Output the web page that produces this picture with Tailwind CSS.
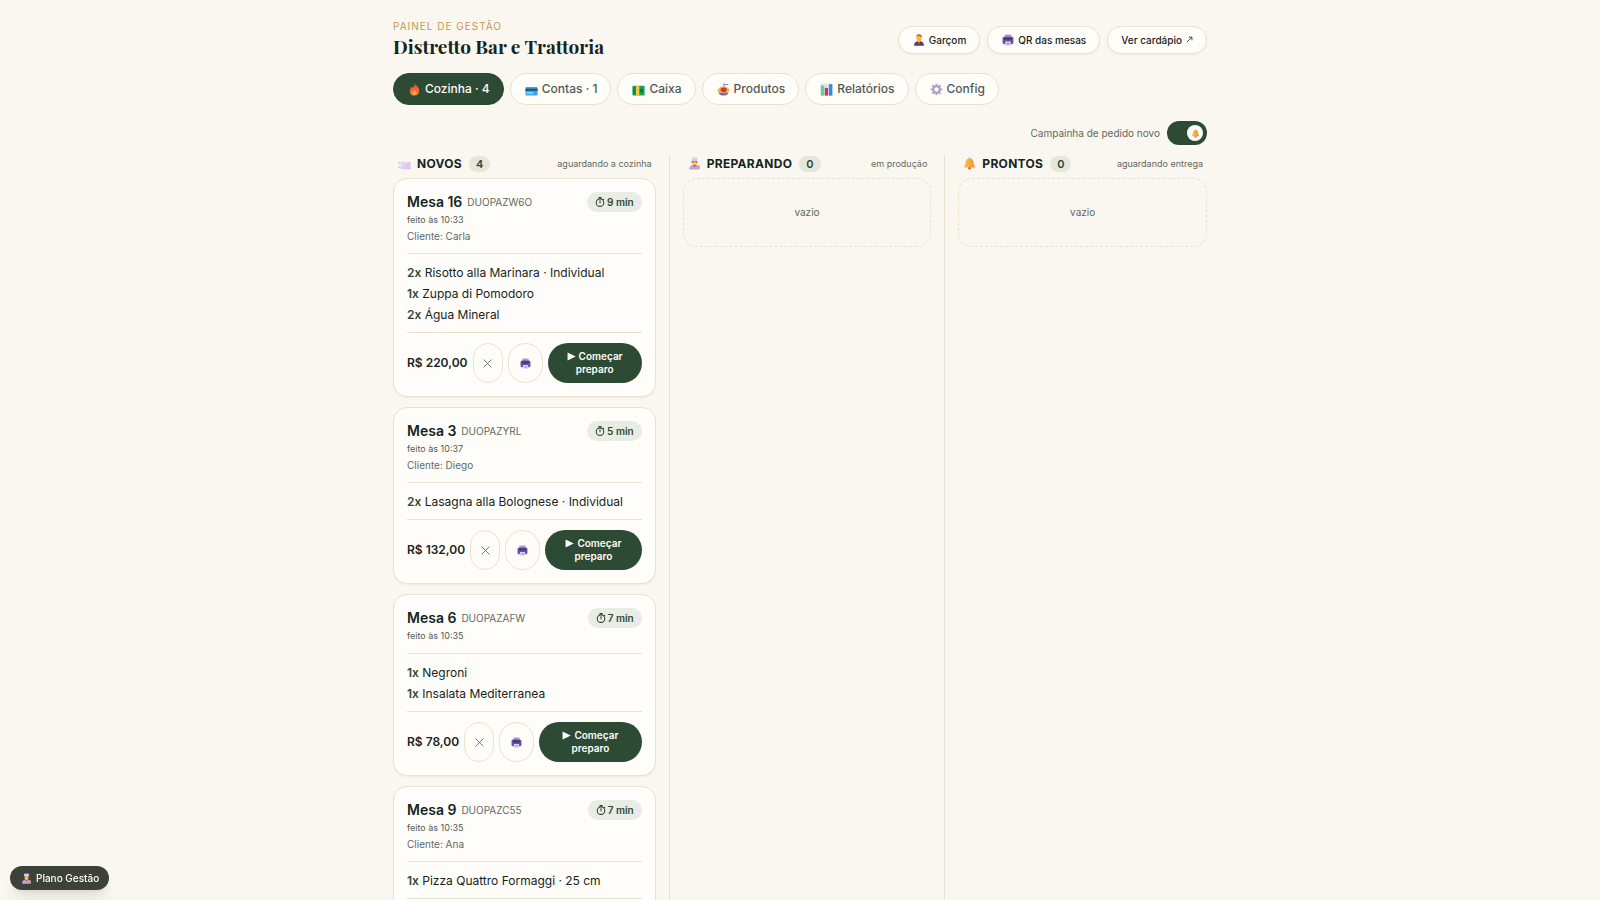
<!DOCTYPE html>
<html lang="pt-BR">
<head>
    <meta charset="UTF-8">
    <meta name="viewport" content="width=device-width, initial-scale=1.0">
    <title>Painel de Gestão · Distretto Bar e Trattoria</title>
    <script src="https://cdn.jsdelivr.net/npm/@tailwindcss/browser@4"></script>
</head>
<body class="min-h-screen bg-[#faf7f0] font-['Inter','Liberation_Sans',sans-serif] text-[#16241d]">

    <!-- Icon set -->
    <svg class="absolute size-0" aria-hidden="true">
        <defs>
            <linearGradient id="g-fire" x1="0" y1="0" x2="0" y2="1"><stop offset="0" stop-color="#e8442f"/><stop offset="1" stop-color="#ff8a3c"/></linearGradient>
            <linearGradient id="g-bell" x1="0" y1="0" x2="1" y2="0"><stop offset="0" stop-color="#ffc94d"/><stop offset="1" stop-color="#f08a35"/></linearGradient>
            <linearGradient id="g-mail" x1="0" y1="0" x2="1" y2="1"><stop offset="0" stop-color="#efe6fa"/><stop offset="1" stop-color="#d9b8f0"/></linearGradient>
        </defs>
        <symbol id="i-fire" viewBox="0 0 16 16">
            <path fill="url(#g-fire)" d="M8.6 0.6c.5 2 3 3 4.300 5.200 1.900 3.400.8 9.600-4.900 9.600S1.500 10.400 3 7c.4-1 1-1.700 1.300-2.700.7.5 1 1.100 1.200 1.700C7.300 4.600 8.700 3 8.600.6z"/>
            <path fill="#ffb04a" d="M8.300 8.500c.3 1.300 1.900 1.900 1.900 3.600 0 1.400-.9 2.300-2.200 2.300s-2.300-.8-2.300-2.200c0-1.700 2-2.100 2.600-3.700z"/>
        </symbol>
        <symbol id="i-card" viewBox="0 0 16 16">
            <rect x="0.500" y="5" width="15" height="10.500" rx="1.200" fill="#3ba7ea"/>
            <rect x="0.500" y="7" width="15" height="2.600" fill="#24506f"/>
            <rect x="2" y="11.500" width="8" height="1.600" fill="#a9dcf8"/>
        </symbol>
        <symbol id="i-cash" viewBox="0 0 16 16">
            <rect x="0.500" y="3.500" width="15" height="12" rx="1" fill="#12a558"/>
            <circle cx="11.500" cy="9.500" r="2.600" fill="#0b7d3e"/>
            <rect x="5" y="3.500" width="4" height="12" fill="#f6c84a"/>
            <rect x="1.500" y="5" width="2.500" height="9" fill="#0b8a45"/>
        </symbol>
        <symbol id="i-pasta" viewBox="0 0 16 16">
            <path stroke="#8d7aa8" stroke-width="1.200" d="M8.500 0.500v6M8.500 2h5.500"/>
            <ellipse cx="8" cy="9" rx="7.300" ry="4.600" fill="#f6b93c"/>
            <path fill="#8464b4" d="M1.800 12h12.400c-1 2.500-3 3.500-6.200 3.500s-5.200-1-6.200-3.500z"/>
            <ellipse cx="8.200" cy="8.300" rx="3.800" ry="2.900" fill="#d62f4b"/>
        </symbol>
        <symbol id="i-chart" viewBox="0 0 16 16">
            <rect x="0.500" y="0.500" width="15" height="15" rx="1" fill="#dfe6ee"/>
            <rect x="1" y="3" width="4.200" height="12.500" fill="#63d488"/>
            <rect x="6" y="6" width="4" height="9.500" fill="#d8315f"/>
            <rect x="11" y="1.500" width="4.200" height="14" fill="#2f8be0"/>
        </symbol>
        <symbol id="i-gear" viewBox="0 0 16 16">
            <g stroke="#b3a6cb" stroke-width="2.600"><path d="M8 .8v14.400M.8 8h14.400M2.900 2.900l10.200 10.200M13.100 2.900L2.900 13.100"/></g>
            <circle cx="8" cy="8" r="5.200" fill="#a99bc4"/>
            <circle cx="8" cy="8" r="2.700" fill="#fffdf9"/>
        </symbol>
        <symbol id="i-waiter" viewBox="0 0 16 16">
            <path fill="#503c78" d="M1.500 15.500c0-4 1.500-6 6.500-6s6.500 2 6.500 6z"/>
            <path fill="#e8dff5" d="M6.300 9.500h3.400L8 12z"/>
            <path fill="#d8315f" d="M7.400 10.500h1.200l.6 3.500H6.800z"/>
            <ellipse cx="8" cy="5.600" rx="3.400" ry="4.500" fill="#ffb92e"/>
            <path fill="#a86a3c" d="M4.400 4.500C4 2 5.500.3 8.200.3s4 1.600 3.400 4.200C10.500 3.500 9.800 2.800 9.200 2 8 2.800 6.500 3.200 5.200 3z"/>
        </symbol>
        <symbol id="i-printer" viewBox="0 0 16 16">
            <rect x="3.500" y="0.800" width="9" height="5" fill="#a999cc"/>
            <rect x="0.800" y="3.500" width="14.400" height="10" rx="2.200" fill="#6650a0"/>
            <rect x="3" y="5.500" width="10" height="2" fill="#402d6c"/>
            <rect x="4.200" y="10" width="7.600" height="5.500" rx="0.500" fill="#ded4f0"/>
            <path stroke="#7f6bb0" d="M5.500 13h5"/>
        </symbol>
        <symbol id="i-mail" viewBox="0 0 16 16">
            <rect x="3.500" y="6" width="12" height="9" rx="0.800" fill="url(#g-mail)"/>
            <path fill="none" stroke="#cdb4e8" stroke-width="0.800" d="M4 6.500l5.500 4L15 6.500"/>
            <path stroke="#8fd0ee" stroke-width="1.200" d="M0 7h3M1 10h2M0 13h3"/>
        </symbol>
        <symbol id="i-cook" viewBox="0 0 16 16">
            <path fill="#b9a4dd" d="M1.500 15.500c0-4 2-6 6.500-6s6.500 2 6.500 6z"/>
            <path fill="#e2423c" d="M5.500 9.300h5L8.300 12.500z"/>
            <ellipse cx="8" cy="6.800" rx="3" ry="3.400" fill="#ffc143"/>
            <path fill="#8a5238" d="M4.600 5h6.800v2.500h-1L10 5.800H6l-.4 1.700h-1z"/>
            <path fill="#d8cdeb" d="M4.800 5.200L4.200 2C5 .3 11 .3 11.800 2l-.6 3.200z"/>
            <circle cx="13.300" cy="12" r="1.400" fill="#f09a3c"/>
        </symbol>
        <symbol id="i-bell" viewBox="0 0 16 16">
            <circle cx="8" cy="13.600" r="1.900" fill="#d9702c"/>
            <path fill="url(#g-bell)" d="M8 .6c.8 0 1.200.6 1.200 1.300 2.500.7 3.500 2.500 3.700 5 .2 2.700.8 4.300 2.400 6.100H.7c1.600-1.800 2.200-3.400 2.400-6.100.2-2.500 1.200-4.300 3.700-5C6.800 1.200 7.200.6 8 .6z"/>
        </symbol>
        <symbol id="i-clock" viewBox="0 0 16 16">
            <g fill="none" stroke="currentColor" stroke-width="1.700"><circle cx="8" cy="9" r="6"/><path d="M8 10V5M5.500 1h5M8 1v2M12.800 3l1.500 1.500"/></g>
        </symbol>
        <symbol id="i-close" viewBox="0 0 16 16">
            <path stroke="currentColor" stroke-width="1.600" d="M1 1l14 14M15 1L1 15"/>
        </symbol>
        <symbol id="i-play" viewBox="0 0 16 16">
            <path fill="currentColor" d="M1 1L15.500 8 1 15z"/>
        </symbol>
        <symbol id="i-arrow" viewBox="0 0 16 16">
            <path fill="none" stroke="currentColor" stroke-width="1.800" d="M2 14L13 3M6 2.500h7.500V10"/>
        </symbol>
    </svg>

    <div class="mx-auto flex min-h-screen max-w-[814px] flex-col pt-[19px]">

        <!-- Header -->
        <header class="flex items-center justify-between">
            <div>
                <p class="text-[10px] leading-[14px] tracking-widest text-[#c0994f]">PAINEL DE GESTÃO</p>
                <h1 class="font-['Playfair_Display','Liberation_Serif',serif] text-[19px] leading-[27px] font-bold">Distretto Bar e Trattoria</h1>
            </div>
            <nav class="flex gap-[7px] text-[10px] leading-4 font-medium">
                <a href="#garcom" class="flex items-center rounded-full border border-[#e9e2d0] bg-[#fffdf9] px-[13px] py-[5px] shadow-xs"><svg class="mr-1 ml-px size-3"><use href="#i-waiter"/></svg>Garçom</a>
                <a href="#qr" class="flex items-center rounded-full border border-[#e9e2d0] bg-[#fffdf9] px-[13px] py-[5px] shadow-xs"><svg class="mr-1 ml-px size-3"><use href="#i-printer"/></svg>QR das mesas</a>
                <a href="#cardapio" class="flex items-center rounded-full border border-[#e9e2d0] bg-[#fffdf9] px-[13px] py-[5px] shadow-xs">Ver cardápio<svg class="ml-1 size-[7px]"><use href="#i-arrow"/></svg></a>
            </nav>
        </header>

        <!-- Tabs -->
        <nav class="mt-[13px] flex gap-[6px] text-xs leading-5 font-medium text-[#4f5a53]">
            <button type="button" class="flex items-center rounded-full border border-[#2d4a34] bg-[#2d4a34] px-[13px] py-[5px] text-[#fffdf9]"><svg class="mr-1 ml-px size-[13px]"><use href="#i-fire"/></svg>Cozinha · 4</button>
            <button type="button" class="flex items-center rounded-full border border-[#e9e2d0] bg-[#fffdf9] px-[13px] py-[5px]"><svg class="mr-1 ml-px size-[13px]"><use href="#i-card"/></svg>Contas · 1</button>
            <button type="button" class="flex items-center rounded-full border border-[#e9e2d0] bg-[#fffdf9] px-[13px] py-[5px]"><svg class="mr-1 ml-px size-[13px]"><use href="#i-cash"/></svg>Caixa</button>
            <button type="button" class="flex items-center rounded-full border border-[#e9e2d0] bg-[#fffdf9] px-[13px] py-[5px]"><svg class="mr-1 ml-px size-[13px]"><use href="#i-pasta"/></svg>Produtos</button>
            <button type="button" class="flex items-center rounded-full border border-[#e9e2d0] bg-[#fffdf9] px-[13px] py-[5px]"><svg class="mr-1 ml-px size-[13px]"><use href="#i-chart"/></svg>Relatórios</button>
            <button type="button" class="flex items-center rounded-full border border-[#e9e2d0] bg-[#fffdf9] px-[13px] py-[5px]"><svg class="mr-1 ml-px size-[13px]"><use href="#i-gear"/></svg>Config</button>
        </nav>

        <!-- New order bell -->
        <div class="mt-4 flex items-center justify-end gap-[7px]">
            <label for="campainha" class="text-[10px] leading-4 text-[#5f6962]">Campainha de pedido novo</label>
            <button type="button" id="campainha" role="switch" aria-checked="true" class="flex h-6 w-10 items-center justify-end rounded-full bg-[#2d4a34] pr-1">
                <span class="flex size-4 items-center justify-center rounded-full bg-white"><svg class="size-[9px]"><use href="#i-bell"/></svg></span>
            </button>
        </div>

        <!-- Board -->
        <main class="mt-[10px] grid flex-1 grid-cols-3 gap-[13px]">
            <section>
                <div class="flex h-[17px] items-center pr-1 pl-[5px]">
                    <svg class="mr-[6px] size-[13px]"><use href="#i-mail"/></svg>
                    <h2 class="text-xs leading-4 font-bold tracking-wide">NOVOS</h2>
                    <span class="ml-[7px] rounded-full bg-[#e6e6dc] px-[7px] text-[11px] leading-4 font-semibold text-[#2d4a34]">4</span>
                    <span class="ml-auto text-[9px] leading-4 text-[#5f6962]">aguardando a cozinha</span>
                </div>

                <div class="mt-[6px] flex flex-col gap-[10px]">
                    <article class="rounded-[14px] border border-[#e9e2d0] bg-[#fffdf9] p-[13px] shadow-xs">
                        <div class="flex h-5 items-center">
                            <h3 class="text-sm font-semibold">Mesa 16</h3>
                            <span class="mt-px ml-[5px] text-[10px] text-[#5f6962]">DUOPAZW6O</span>
                            <span class="ml-auto flex items-center rounded-full bg-[#e9ebe5] px-2 text-[10px] leading-5 font-semibold text-[#2d4a34]"><svg class="mr-[2px] size-[10px]"><use href="#i-clock"/></svg>9 min</span>
                        </div>
                        <p class="text-[9px] leading-4 text-[#4f5a53]">feito às 10:33</p>
                        <p class="text-[10px] leading-4 text-[#5f6962]">Cliente: Carla</p>
                        <ul class="mt-[9px] border-y border-[#e9e2d0] pt-2 pb-[7px] text-xs leading-[21px]">
                            <li><b class="font-semibold text-[#2d4a34]">2x</b> Risotto alla Marinara · Individual</li>
                            <li><b class="font-semibold text-[#2d4a34]">1x</b> Zuppa di Pomodoro</li>
                            <li><b class="font-semibold text-[#2d4a34]">2x</b> Água Mineral</li>
                        </ul>
                        <div class="mt-[10px] flex items-center gap-[5px]">
                            <span class="text-xs font-semibold whitespace-nowrap">R$ 220,00</span>
                            <button type="button" aria-label="Cancelar" class="flex h-10 w-[30px] shrink-0 items-center justify-center rounded-full border border-[#e9e2d0] text-[#5f6962]"><svg class="size-[9px]"><use href="#i-close"/></svg></button>
                            <button type="button" aria-label="Imprimir" class="flex h-10 w-[35px] shrink-0 items-center justify-center rounded-full border border-[#e9e2d0]"><svg class="size-[11px]"><use href="#i-printer"/></svg></button>
                            <button type="button" class="flex h-10 flex-1 flex-col items-center justify-center rounded-full bg-[#2d4a34] text-[10px] leading-[13px] font-semibold text-[#fffdf9]"><span class="flex items-center gap-[3px]"><svg class="size-[9px]"><use href="#i-play"/></svg>Começar</span>preparo</button>
                        </div>
                    </article>

                    <article class="rounded-[14px] border border-[#e9e2d0] bg-[#fffdf9] p-[13px] shadow-xs">
                        <div class="flex h-5 items-center">
                            <h3 class="text-sm font-semibold">Mesa 3</h3>
                            <span class="mt-px ml-[5px] text-[10px] text-[#5f6962]">DUOPAZYRL</span>
                            <span class="ml-auto flex items-center rounded-full bg-[#e9ebe5] px-2 text-[10px] leading-5 font-semibold text-[#2d4a34]"><svg class="mr-[2px] size-[10px]"><use href="#i-clock"/></svg>5 min</span>
                        </div>
                        <p class="text-[9px] leading-4 text-[#4f5a53]">feito às 10:37</p>
                        <p class="text-[10px] leading-4 text-[#5f6962]">Cliente: Diego</p>
                        <ul class="mt-[9px] border-y border-[#e9e2d0] pt-2 pb-[7px] text-xs leading-[21px]">
                            <li><b class="font-semibold text-[#2d4a34]">2x</b> Lasagna alla Bolognese · Individual</li>
                        </ul>
                        <div class="mt-[10px] flex items-center gap-[5px]">
                            <span class="text-xs font-semibold whitespace-nowrap">R$ 132,00</span>
                            <button type="button" aria-label="Cancelar" class="flex h-10 w-[30px] shrink-0 items-center justify-center rounded-full border border-[#e9e2d0] text-[#5f6962]"><svg class="size-[9px]"><use href="#i-close"/></svg></button>
                            <button type="button" aria-label="Imprimir" class="flex h-10 w-[35px] shrink-0 items-center justify-center rounded-full border border-[#e9e2d0]"><svg class="size-[11px]"><use href="#i-printer"/></svg></button>
                            <button type="button" class="flex h-10 flex-1 flex-col items-center justify-center rounded-full bg-[#2d4a34] text-[10px] leading-[13px] font-semibold text-[#fffdf9]"><span class="flex items-center gap-[3px]"><svg class="size-[9px]"><use href="#i-play"/></svg>Começar</span>preparo</button>
                        </div>
                    </article>

                    <article class="rounded-[14px] border border-[#e9e2d0] bg-[#fffdf9] p-[13px] shadow-xs">
                        <div class="flex h-5 items-center">
                            <h3 class="text-sm font-semibold">Mesa 6</h3>
                            <span class="mt-px ml-[5px] text-[10px] text-[#5f6962]">DUOPAZAFW</span>
                            <span class="ml-auto flex items-center rounded-full bg-[#e9ebe5] px-2 text-[10px] leading-5 font-semibold text-[#2d4a34]"><svg class="mr-[2px] size-[10px]"><use href="#i-clock"/></svg>7 min</span>
                        </div>
                        <p class="text-[9px] leading-4 text-[#4f5a53]">feito às 10:35</p>
                        <ul class="mt-[9px] border-y border-[#e9e2d0] pt-2 pb-[7px] text-xs leading-[21px]">
                            <li><b class="font-semibold text-[#2d4a34]">1x</b> Negroni</li>
                            <li><b class="font-semibold text-[#2d4a34]">1x</b> Insalata Mediterranea</li>
                        </ul>
                        <div class="mt-[10px] flex items-center gap-[5px]">
                            <span class="text-xs font-semibold whitespace-nowrap">R$ 78,00</span>
                            <button type="button" aria-label="Cancelar" class="flex h-10 w-[30px] shrink-0 items-center justify-center rounded-full border border-[#e9e2d0] text-[#5f6962]"><svg class="size-[9px]"><use href="#i-close"/></svg></button>
                            <button type="button" aria-label="Imprimir" class="flex h-10 w-[35px] shrink-0 items-center justify-center rounded-full border border-[#e9e2d0]"><svg class="size-[11px]"><use href="#i-printer"/></svg></button>
                            <button type="button" class="flex h-10 flex-1 flex-col items-center justify-center rounded-full bg-[#2d4a34] text-[10px] leading-[13px] font-semibold text-[#fffdf9]"><span class="flex items-center gap-[3px]"><svg class="size-[9px]"><use href="#i-play"/></svg>Começar</span>preparo</button>
                        </div>
                    </article>

                    <article class="rounded-[14px] border border-[#e9e2d0] bg-[#fffdf9] p-[13px] shadow-xs">
                        <div class="flex h-5 items-center">
                            <h3 class="text-sm font-semibold">Mesa 9</h3>
                            <span class="mt-px ml-[5px] text-[10px] text-[#5f6962]">DUOPAZC55</span>
                            <span class="ml-auto flex items-center rounded-full bg-[#e9ebe5] px-2 text-[10px] leading-5 font-semibold text-[#2d4a34]"><svg class="mr-[2px] size-[10px]"><use href="#i-clock"/></svg>7 min</span>
                        </div>
                        <p class="text-[9px] leading-4 text-[#4f5a53]">feito às 10:35</p>
                        <p class="text-[10px] leading-4 text-[#5f6962]">Cliente: Ana</p>
                        <ul class="mt-[9px] border-y border-[#e9e2d0] pt-2 pb-[7px] text-xs leading-[21px]">
                            <li><b class="font-semibold text-[#2d4a34]">1x</b> Pizza Quattro Formaggi · 25 cm</li>
                        </ul>
                    </article>
                </div>
            </section>

            <section class="border-l border-[#e9e2d0] pl-[13px]">
                <div class="flex h-[17px] items-center pr-1 pl-[5px]">
                    <svg class="mr-[6px] size-[13px]"><use href="#i-cook"/></svg>
                    <h2 class="text-xs leading-4 font-bold tracking-wide">PREPARANDO</h2>
                    <span class="ml-[7px] rounded-full bg-[#e6e6dc] px-[7px] text-[11px] leading-4 font-semibold text-[#2d4a34]">0</span>
                    <span class="ml-auto text-[9px] leading-4 text-[#5f6962]">em produção</span>
                </div>
                <p class="mt-[6px] rounded-[14px] border border-dashed border-[#e9e2d0] py-[25px] text-center text-[10px] leading-[17px] text-[#5f6962]">vazio</p>
            </section>

            <section class="border-l border-[#e9e2d0] pl-[13px]">
                <div class="flex h-[17px] items-center pr-1 pl-[5px]">
                    <svg class="mr-[6px] size-[13px]"><use href="#i-bell"/></svg>
                    <h2 class="text-xs leading-4 font-bold tracking-wide">PRONTOS</h2>
                    <span class="ml-[7px] rounded-full bg-[#e6e6dc] px-[7px] text-[11px] leading-4 font-semibold text-[#2d4a34]">0</span>
                    <span class="ml-auto text-[9px] leading-4 text-[#5f6962]">aguardando entrega</span>
                </div>
                <p class="mt-[6px] rounded-[14px] border border-dashed border-[#e9e2d0] py-[25px] text-center text-[10px] leading-[17px] text-[#5f6962]">vazio</p>
            </section>
        </main>
    </div>

    <!-- Plan badge -->
    <div class="fixed bottom-[10px] left-[10px] flex items-center rounded-full bg-[#3d4239] px-[10px] text-[10px] leading-6 font-medium text-[#fffdf9] shadow-lg">
        <svg class="mr-1 ml-px size-[11px]"><use href="#i-cook"/></svg>Plano Gestão
    </div>
</body>
</html>
